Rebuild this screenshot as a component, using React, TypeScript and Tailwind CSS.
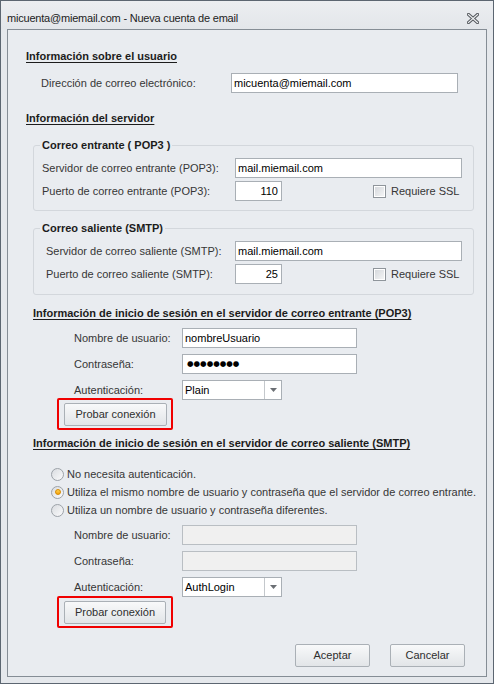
import React from 'react'

function Field({ w, value, right, disabled, mono }: { w: string; value?: string; right?: boolean; disabled?: boolean; mono?: boolean }) {
  return (
    <div
      className={`${w} h-[20px] border flex items-center text-[11px] text-black ${
        disabled ? 'bg-[#f0f0f0] border-[#b9bec3]' : 'bg-white border-[#a9afb5]'
      } ${right ? 'justify-end pr-[3px]' : 'pl-[2px]'}`}
    >
      {mono ? (
        <span className="font-['DejaVu_Sans',sans-serif] text-[7.5px] pl-[2px]">●●●●●●●●</span>
      ) : (
        value
      )}
    </div>
  )
}

function Combo({ value }: { value: string }) {
  return (
    <div className="w-[100px] h-[20px] border border-[#a9afb5] bg-white flex text-[11px] text-black">
      <div className="flex-1 flex items-center pl-[2px]">{value}</div>
      <div className="w-[17px] border-l border-[#c4c8cc] flex items-center justify-center">
        <svg width="7" height="4" viewBox="0 0 7 4">
          <path d="M0 0 L7 0 L3.5 4 Z" fill="#6b6f74" />
        </svg>
      </div>
    </div>
  )
}

function Btn({ label, w }: { label: string; w: string }) {
  return (
    <div
      className={`${w} h-[23px] border border-[#aab0b6] rounded-[2px] bg-gradient-to-b from-[#f8f9fa] to-[#e2e5e8] flex items-center justify-center text-[11px] text-[#2e2e2e]`}
    >
      {label}
    </div>
  )
}

function Check() {
  return (
    <div className="w-[13px] h-[13px] border border-[#8f959b] bg-white p-[1px]">
      <div className="w-full h-full bg-gradient-to-br from-[#d6d9dd] to-[#f3f4f5]" />
    </div>
  )
}

function Radio({ on }: { on?: boolean }) {
  return (
    <div className="w-[13px] h-[13px] rounded-full border border-[#9ca2a8] bg-gradient-to-br from-[#d9dce0] to-[#fbfbfc] flex items-center justify-center">
      {on && <div className="w-[6px] h-[6px] rounded-full border border-[#d78a00] bg-gradient-to-b from-[#ffd24a] to-[#f3a300]" />}
    </div>
  )
}

function Head({ children, ml }: { children: React.ReactNode; ml: string }) {
  return (
    <div className={`${ml} h-[13px] leading-[13px] text-[11px] font-bold underline underline-offset-[2px] text-[#1c1c1c]`}>
      {children}
    </div>
  )
}

function Row({ mt, ml, lw, label, children }: { mt: string; ml: string; lw: string; label: string; children: React.ReactNode }) {
  return (
    <div className={`${mt} ${ml} flex h-[20px] items-center`}>
      <div className={`${lw} text-[11px] text-[#363636]`}>{label}</div>
      {children}
    </div>
  )
}

function Group({ mt, pb, title, children }: { mt: string; pb: string; title: string; children: React.ReactNode }) {
  return (
    <fieldset className={`${mt} ${pb} ml-[25px] w-[441px] border border-[#d3d7dc] rounded-[3px]`}>
      <legend className="ml-[6px] px-[2px] h-[13px] leading-[13px] text-[11px] font-bold text-[#1c1c1c]">{title}</legend>
      {children}
    </fieldset>
  )
}

export default function App() {
  return (
    <div className="w-[494px] h-[684px] border border-[#5c6671] bg-[#e5e8ec] flex flex-col font-['Liberation_Sans',Arial,sans-serif]">
      {/* title bar */}
      <div className="h-[28px] flex items-start justify-between pl-[6px] pr-[14px] pt-[9px] bg-gradient-to-b from-[#eceef1] to-[#e3e6ea]">
        <span className="text-[11px] leading-[16px] tracking-[-0.2px] text-[#222]">micuenta@miemail.com - Nueva cuenta de email</span>
        <svg width="12" height="11" viewBox="0 0 12 11" className="mt-[3px]">
          <path d="M1.5 1.5 L10.5 9.5 M10.5 1.5 L1.5 9.5" stroke="#55595e" strokeWidth="3.2" strokeLinecap="square" />
          <path d="M1.5 1.5 L10.5 9.5 M10.5 1.5 L1.5 9.5" stroke="#eef0f2" strokeWidth="1.2" strokeLinecap="square" />
        </svg>
      </div>

      {/* main panel */}
      <div className="mx-[6px] h-[648px] border border-[#858d95] bg-[#e9ecf0] flex flex-col">
        <Head ml="ml-[18px] mt-[20px]">Información sobre el usuario</Head>
        <Row mt="mt-[10px]" ml="ml-[33px]" lw="w-[190px]" label="Dirección de correo electrónico:">
          <Field w="w-[227px]" value="micuenta@miemail.com" />
        </Row>

        <Head ml="ml-[18px] mt-[19px]">Información del servidor</Head>

        <Group mt="mt-[14px]" pb="pb-[9px]" title="Correo entrante ( POP3 )">
          <Row mt="mt-[6px]" ml="ml-[8px]" lw="w-[193px]" label="Servidor de correo entrante (POP3):">
            <Field w="w-[227px]" value="mail.miemail.com" />
          </Row>
          <Row mt="mt-[3px]" ml="ml-[8px]" lw="w-[193px]" label="Puerto de correo entrante (POP3):">
            <Field w="w-[47px]" value="110" right />
            <div className="ml-[91px] flex items-center gap-[5px] text-[11px] text-[#363636]">
              <Check />
              <span>Requiere SSL</span>
            </div>
          </Row>
        </Group>

        <Group mt="mt-[11px]" pb="pb-[10px]" title="Correo saliente (SMTP)">
          <Row mt="mt-[6px]" ml="ml-[12px]" lw="w-[189px]" label="Servidor de correo saliente (SMTP):">
            <Field w="w-[227px]" value="mail.miemail.com" />
          </Row>
          <Row mt="mt-[3px]" ml="ml-[12px]" lw="w-[189px]" label="Puerto de correo saliente (SMTP):">
            <Field w="w-[47px]" value="25" right />
            <div className="ml-[91px] flex items-center gap-[5px] text-[11px] text-[#363636]">
              <Check />
              <span>Requiere SSL</span>
            </div>
          </Row>
        </Group>

        <Head ml="ml-[25px] mt-[12px]">Información de inicio de sesión en el servidor de correo entrante (POP3)</Head>
        <Row mt="mt-[8px]" ml="ml-[66px]" lw="w-[108px]" label="Nombre de usuario:">
          <Field w="w-[175px]" value="nombreUsuario" />
        </Row>
        <Row mt="mt-[6px]" ml="ml-[66px]" lw="w-[108px]" label="Contraseña:">
          <Field w="w-[175px]" mono />
        </Row>
        <Row mt="mt-[6px]" ml="ml-[66px]" lw="w-[108px]" label="Autenticación:">
          <Combo value="Plain" />
        </Row>
        <div className="mt-[-2px] ml-[49px] w-[116px] h-[32px] border-2 border-[#f00000] rounded-[2px] pl-[5px] pt-[3px]">
          <Btn label="Probar conexión" w="w-[103px]" />
        </div>

        <Head ml="ml-[25px] mt-[7px]">Información de inicio de sesión en el servidor de correo saliente (SMTP)</Head>
        <div className="mt-[15px] ml-[43px] flex flex-col text-[11px] text-[#363636]">
          <div className="h-[18px] flex items-center gap-[3px]">
            <Radio />
            <span>No necesita autenticación.</span>
          </div>
          <div className="h-[18px] flex items-center gap-[3px]">
            <Radio on />
            <span>Utiliza el mismo nombre de usuario y contraseña que el servidor de correo entrante.</span>
          </div>
          <div className="h-[18px] flex items-center gap-[3px]">
            <Radio />
            <span>Utiliza un nombre de usuario y contraseña diferentes.</span>
          </div>
        </div>
        <Row mt="mt-[6px]" ml="ml-[66px]" lw="w-[108px]" label="Nombre de usuario:">
          <Field w="w-[175px]" disabled />
        </Row>
        <Row mt="mt-[6px]" ml="ml-[66px]" lw="w-[108px]" label="Contraseña:">
          <Field w="w-[175px]" disabled />
        </Row>
        <Row mt="mt-[6px]" ml="ml-[66px]" lw="w-[108px]" label="Autenticación:">
          <Combo value="AuthLogin" />
        </Row>
        <div className="mt-[-1px] ml-[49px] w-[116px] h-[32px] border-2 border-[#f00000] rounded-[2px] pl-[5px] pt-[3px]">
          <Btn label="Probar conexión" w="w-[102px]" />
        </div>

        <div className="mt-[16px] flex justify-end gap-[20px] pr-[21px]">
          <Btn label="Aceptar" w="w-[75px]" />
          <Btn label="Cancelar" w="w-[75px]" />
        </div>
      </div>
    </div>
  )
}
